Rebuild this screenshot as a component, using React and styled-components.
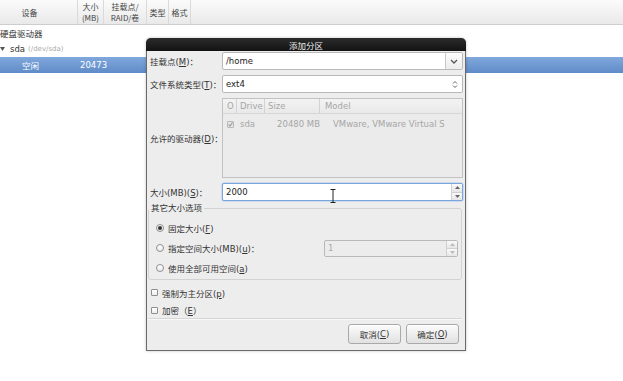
import React from 'react';
import styled, { createGlobalStyle } from 'styled-components';

const GlobalStyle = createGlobalStyle`
  html, body {
    margin: 0;
    padding: 0;
  }
  body {
    width: 623px;
    height: 381px;
    overflow: hidden;
    background: #fff;
    font-family: 'DejaVu Sans', 'Noto Sans CJK SC', sans-serif;
    font-size: 8.5px;
    color: #333;
  }
  u {
    text-decoration: underline;
    text-underline-offset: 1px;
  }
`;

const Screen = styled.div`
  position: relative;
  width: 623px;
  height: 381px;
  overflow: hidden;
  background: #fff;
`;

/* ---------- background partition table ---------- */

const TableHeader = styled.div`
  display: flex;
  height: 25px;
  box-sizing: border-box;
  background: linear-gradient(#fbfbfb, #e9e9e9);
  border-bottom: 1px solid #cdcdcd;
`;

const HeadCell = styled.div`
  width: ${(p) => p.$w}px;
  box-sizing: border-box;
  display: flex;
  align-items: center;
  justify-content: center;
  padding-right: ${(p) => p.$pr || 0}px;
  border-right: 1px solid #dadada;
  text-align: center;
  line-height: 11px;
  font-family: 'Noto Sans CJK SC', 'DejaVu Sans', sans-serif;
  font-size: 8px;
  color: #444;
`;

const TreeRow = styled.div`
  display: flex;
  align-items: center;
  height: 16px;
  padding-left: ${(p) => p.$indent || 0}px;
  background: ${(p) => (p.$selected ? 'linear-gradient(#80a8dc, #5f8bc8)' : 'transparent')};
  color: ${(p) => (p.$selected ? '#fff' : '#333')};
  font-size: 8.5px;
`;

const TreeCell = styled.div`
  width: ${(p) => (p.$w ? `${p.$w}px` : 'auto')};
  padding-left: ${(p) => p.$pl || 0}px;
  box-sizing: border-box;
`;

const DevPath = styled.span`
  margin-left: 3px;
  font-size: 7px;
  color: #aaa;
`;

/* ---------- dialog window ---------- */

const Dialog = styled.div`
  position: absolute;
  left: 146px;
  top: 38px;
  width: 320px;
  height: 313px;
  box-sizing: border-box;
  display: flex;
  flex-direction: column;
  background: #ededed;
  border: 1px solid #6a6a6a;
  border-top: none;
  border-radius: 5px 5px 0 0;
  box-shadow: 0 0 3px rgba(0, 0, 0, 0.25);
`;

const TitleBar = styled.div`
  height: 18px;
  margin: 0 -1px;
  display: flex;
  align-items: center;
  justify-content: center;
  border-radius: 5px 5px 0 0;
  background: linear-gradient(#2c2c2c, #121212);
  color: #f0f0f0;
  font-family: 'Noto Sans CJK SC', sans-serif;
  font-size: 8.5px;
`;

const Body = styled.div`
  flex: 1;
  display: flex;
  flex-direction: column;
  padding: 1px 2px 6px 0;
`;

const FormGrid = styled.div`
  display: grid;
  grid-template-columns: 75px 241px;
  grid-template-rows: 18px 18px 80px 18px;
  row-gap: 5px;
  align-items: center;
`;

const Label = styled.div`
  padding-left: 3px;
  white-space: nowrap;
  color: #333;
`;

const Field = styled.div`
  position: relative;
  height: 18px;
  box-sizing: border-box;
  display: flex;
  background: ${(p) => (p.$disabled ? '#ececec' : '#fff')};
  border: 1px solid ${(p) => (p.$focus ? '#79a6dc' : '#b9b9b9')};
  border-radius: 2px;
  box-shadow: ${(p) => (p.$focus ? '0 0 0 0.5px #a9c8ee' : 'none')};
`;

const FieldText = styled.div`
  flex: 1;
  display: flex;
  align-items: center;
  padding-left: 3px;
  font-size: 8.5px;
  color: ${(p) => (p.$disabled ? '#aaa' : '#222')};
`;

const DropButton = styled.div`
  width: 16px;
  display: flex;
  align-items: center;
  justify-content: center;
  border-left: 1px solid #c9c9c9;
  background: linear-gradient(#fdfdfd, #ececec);
`;

const ArrowSlot = styled.div`
  width: 14px;
  display: flex;
  align-items: center;
  justify-content: center;
`;

const SpinButtons = styled.div`
  width: 10px;
  display: flex;
  flex-direction: column;
  border-left: 1px solid #d0d0d0;
`;

const SpinHalf = styled.div`
  flex: 1;
  display: flex;
  align-items: center;
  justify-content: center;
  background: linear-gradient(#fafafa, #e6e6e6);
  & + & {
    border-top: 1px solid #d0d0d0;
  }
`;

const Cursor = styled.svg`
  position: absolute;
  left: 107px;
  top: 5px;
`;

/* drive list */

const DriveList = styled.div`
  height: 80px;
  box-sizing: border-box;
  border: 1px solid #c2c2c2;
  background: #ebebeb;
  color: #a6a6a6;
`;

const ListHead = styled.div`
  display: flex;
  height: 14px;
  background: linear-gradient(#f3f3f3, #e9e9e9);
  border-bottom: 1px solid #d6d6d6;
`;

const ListHeadCell = styled.div`
  width: ${(p) => (p.$w ? `${p.$w}px` : 'auto')};
  flex: ${(p) => (p.$w ? 'none' : 1)};
  box-sizing: border-box;
  display: flex;
  align-items: center;
  padding-left: ${(p) => p.$pl || 3}px;
  border-right: ${(p) => (p.$w ? '1px solid #d2d2d2' : 'none')};
`;

const ListRow = styled.div`
  display: flex;
  align-items: center;
  height: 16px;
  margin-top: 2px;
`;

const ListCell = styled.div`
  width: ${(p) => (p.$w ? `${p.$w}px` : 'auto')};
  flex: ${(p) => (p.$w ? 'none' : 1)};
  box-sizing: border-box;
  display: flex;
  align-items: center;
  justify-content: ${(p) => (p.$right ? 'flex-end' : 'flex-start')};
  padding-left: ${(p) => p.$pl || 0}px;
  padding-right: ${(p) => p.$pr || 0}px;
  white-space: nowrap;
  overflow: hidden;
`;

const CheckBox = styled.span`
  width: 7px;
  height: 7px;
  box-sizing: border-box;
  display: inline-flex;
  align-items: center;
  justify-content: center;
  border: 1px solid ${(p) => (p.$disabled ? '#b8b8b8' : '#8e8e8e')};
  border-radius: 1px;
  background: ${(p) => (p.$disabled ? '#e6e6e6' : 'linear-gradient(#fff, #ececec)')};
`;

/* size options group */

const Group = styled.fieldset`
  margin: 2px 1px 0 1px;
  padding: 5px 0 1px 0;
  border: 1px solid #d2d2d2;
  border-radius: 3px;
  min-width: 0;
`;

const Legend = styled.legend`
  margin-left: 0;
  padding: 0 2px;
  line-height: 10px;
  font-size: 8.5px;
  color: #333;
`;

const OptionRow = styled.div`
  display: flex;
  align-items: center;
  height: 20px;
  padding-left: 7px;
  padding-right: 3px;
  gap: 4px;
`;

const Radio = styled.span`
  width: 8px;
  height: 8px;
  box-sizing: border-box;
  display: inline-flex;
  align-items: center;
  justify-content: center;
  border: 1px solid #8f8f8f;
  border-radius: 50%;
  background: linear-gradient(#fff, #e9e9e9);
  &::after {
    content: '';
    width: 4px;
    height: 4px;
    border-radius: 50%;
    background: ${(p) => (p.$on ? '#333' : 'transparent')};
  }
`;

const SmallSpin = styled(Field)`
  width: 134px;
  height: 17px;
  margin-left: auto;
`;

const CheckRow = styled.div`
  display: flex;
  align-items: center;
  gap: 4px;
  height: ${(p) => p.$h}px;
  padding-left: 4px;
`;

const Separator = styled.div`
  height: 1px;
  margin: 0 1px;
  background: #d6d6d6;
  border-bottom: 1px solid #f8f8f8;
`;

const ButtonBar = styled.div`
  display: flex;
  justify-content: flex-end;
  gap: 5px;
  margin-top: 4px;
  padding-right: 4px;
`;

const Button = styled.div`
  width: 53px;
  height: 20px;
  box-sizing: border-box;
  display: flex;
  align-items: center;
  justify-content: center;
  border: 1px solid #a9a9a9;
  border-radius: 3px;
  background: linear-gradient(#fcfcfc, #e1e1e1);
  box-shadow: inset 0 1px 0 #fff;
  color: #333;
`;

const Chevron = () => (
  <svg width="8" height="5" viewBox="0 0 8 5">
    <polyline points="1,1 4,4 7,1" fill="none" stroke="#555" strokeWidth="1.3" />
  </svg>
);

const UpDown = () => (
  <svg width="6" height="9" viewBox="0 0 6 9">
    <polyline points="1,3.5 3,1.5 5,3.5" fill="none" stroke="#666" strokeWidth="1" />
    <polyline points="1,5.5 3,7.5 5,5.5" fill="none" stroke="#666" strokeWidth="1" />
  </svg>
);

const Tri = ({ up, color = '#666' }) => (
  <svg width="5" height="3" viewBox="0 0 5 3">
    <polygon points={up ? '0,3 2.5,0 5,3' : '0,0 2.5,3 5,0'} fill={color} />
  </svg>
);

const Tick = () => (
  <svg width="5" height="5" viewBox="0 0 5 5">
    <polyline points="0.6,2.6 2,4 4.5,0.6" fill="none" stroke="#999" strokeWidth="1.1" />
  </svg>
);

const App = () => (
  <Screen>
    <GlobalStyle />

    <TableHeader>
      <HeadCell $w={78} $pr={18}>设备</HeadCell>
      <HeadCell $w={26}>
        大小
        <br />
        (MB)
      </HeadCell>
      <HeadCell $w={43}>
        挂载点/
        <br />
        RAID/卷
      </HeadCell>
      <HeadCell $w={22}>类型</HeadCell>
      <HeadCell $w={22}>格式</HeadCell>
    </TableHeader>

    <TreeRow style={{ fontFamily: "'Noto Sans CJK SC', sans-serif" }}>硬盘驱动器</TreeRow>
    <TreeRow>
      <svg width="5" height="4" viewBox="0 0 5 4">
        <polygon points="0,0 5,0 2.5,4" fill="#555" />
      </svg>
      <span style={{ marginLeft: 5 }}>sda</span>
      <DevPath>(/dev/sda)</DevPath>
    </TreeRow>
    <TreeRow $selected>
      <TreeCell $w={80} $pl={22}>空闲</TreeCell>
      <TreeCell>20473</TreeCell>
    </TreeRow>

    <Dialog>
      <TitleBar>添加分区</TitleBar>
      <Body>
        <FormGrid>
          <Label>
            挂载点(<u>M</u>)：
          </Label>
          <Field>
            <FieldText>/home</FieldText>
            <DropButton>
              <Chevron />
            </DropButton>
          </Field>

          <Label>
            文件系统类型(<u>T</u>)：
          </Label>
          <Field>
            <FieldText>ext4</FieldText>
            <ArrowSlot>
              <UpDown />
            </ArrowSlot>
          </Field>

          <Label>
            允许的驱动器(<u>D</u>)：
          </Label>
          <DriveList>
            <ListHead>
              <ListHeadCell $w={14} $pl={4}>O</ListHeadCell>
              <ListHeadCell $w={28}>Drive</ListHeadCell>
              <ListHeadCell $w={55}>Size</ListHeadCell>
              <ListHeadCell $pl={5}>Model</ListHeadCell>
            </ListHead>
            <ListRow>
              <ListCell $w={14} $pl={4}>
                <CheckBox $disabled>
                  <Tick />
                </CheckBox>
              </ListCell>
              <ListCell $w={28} $pl={3}>sda</ListCell>
              <ListCell $w={55} $right $pr={0}>20480 MB</ListCell>
              <ListCell $pl={13}>VMware, VMware Virtual S</ListCell>
            </ListRow>
          </DriveList>

          <Label>
            大小(MB)(<u>S</u>)：
          </Label>
          <Field $focus>
            <FieldText>2000</FieldText>
            <SpinButtons>
              <SpinHalf>
                <Tri up />
              </SpinHalf>
              <SpinHalf>
                <Tri />
              </SpinHalf>
            </SpinButtons>
            <Cursor width="6" height="14" viewBox="0 0 6 14">
              <path d="M0.5,0.5 H5.5 M3,0.5 V13.5 M0.5,13.5 H5.5" stroke="#222" strokeWidth="1" fill="none" />
            </Cursor>
          </Field>
        </FormGrid>

        <Group>
          <Legend>其它大小选项</Legend>
          <OptionRow>
            <Radio $on />
            <span>
              固定大小(<u>F</u>)
            </span>
          </OptionRow>
          <OptionRow>
            <Radio />
            <span>
              指定空间大小(MB)(<u>u</u>)：
            </span>
            <SmallSpin $disabled>
              <FieldText $disabled>1</FieldText>
              <SpinButtons>
                <SpinHalf>
                  <Tri up color="#bbb" />
                </SpinHalf>
                <SpinHalf>
                  <Tri color="#bbb" />
                </SpinHalf>
              </SpinButtons>
            </SmallSpin>
          </OptionRow>
          <OptionRow>
            <Radio />
            <span>
              使用全部可用空间(<u>a</u>)
            </span>
          </OptionRow>
        </Group>

        <CheckRow $h={19} style={{ marginTop: 3 }}>
          <CheckBox />
          <span>
            强制为主分区(<u>p</u>)
          </span>
        </CheckRow>
        <CheckRow $h={16}>
          <CheckBox />
          <span>
            加密（<u>E</u>）
          </span>
        </CheckRow>
        <Separator />

        <ButtonBar>
          <Button>
            取消(<u>C</u>)
          </Button>
          <Button>
            确定(<u>O</u>)
          </Button>
        </ButtonBar>
      </Body>
    </Dialog>
  </Screen>
);

export default App;
